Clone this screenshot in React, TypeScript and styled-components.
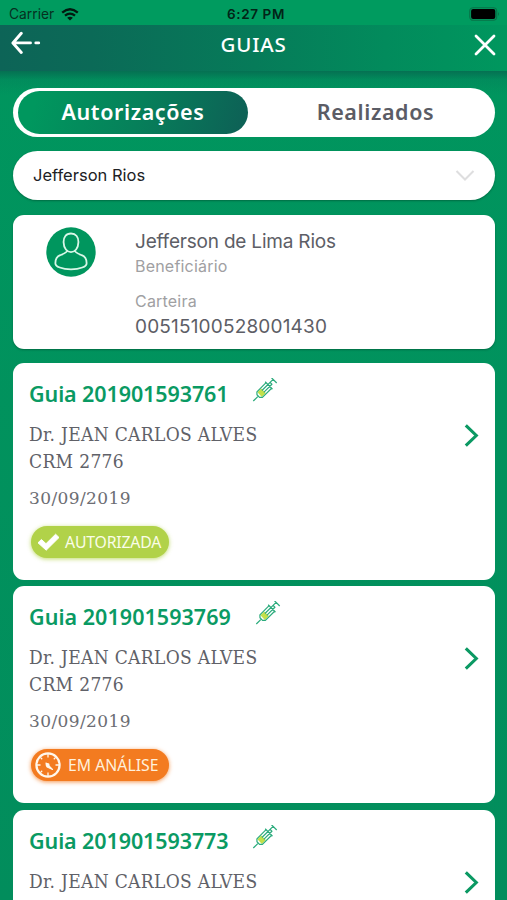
import React from "react";
import styled, { createGlobalStyle } from "styled-components";

const GREEN = "#00965e";
const INTER = `Inter, "Liberation Sans", sans-serif`;
const SANS = `"Noto Sans", "Open Sans", sans-serif`;
const SLAB = `"DejaVu Serif Condensed", "DejaVu Serif", serif`;

const Global = createGlobalStyle`
  * { box-sizing: border-box; }
  body { margin: 0; background: ${GREEN}; overflow: hidden; }
`;

const Screen = styled.div`
  width: 507px;
  height: 900px;
  overflow: hidden;
  background: linear-gradient(#00965e, #028d5c);
  font-family: ${SANS};
`;

const StatusBar = styled.div`
  height: 25px;
  display: grid;
  grid-template-columns: 1fr auto 1fr;
  align-items: center;
  padding: 3px 7px 0 9px;
  background: #009b5f;
  color: #06301f;
  font-family: ${INTER};
  font-size: 13.8px;
  line-height: 22px;
`;

const CarrierGroup = styled.div`
  display: flex;
  align-items: center;
  gap: 7px;
`;

const Clock = styled.span`
  margin-left: 3px;
  color: #022417;
  font-weight: 600;
  font-size: 13.5px;
  letter-spacing: 0.6px;
`;

const BatterySlot = styled.div`
  display: flex;
  justify-content: flex-end;
`;

const Header = styled.header`
  height: 46px;
  display: grid;
  grid-template-columns: 1fr auto 1fr;
  align-items: start;
  padding: 0 11px;
  background: linear-gradient(90deg, #0d6457 0%, #0b6a57 18%, #067b59 50%, #028b5c 76%, #00975e 100%);
`;

const HeaderTitle = styled.h1`
  margin: 4px 0 0;
  color: #fff;
  font-size: 20.5px;
  font-weight: 500;
  line-height: 30px;
  letter-spacing: 0.8px;
`;

const HeaderButton = styled.button<{ $end?: boolean }>`
  display: flex;
  margin: ${(p) => (p.$end ? "9px 0 0" : "6px 0 0")};
  padding: 0;
  border: 0;
  background: none;
  justify-self: ${(p) => (p.$end ? "end" : "start")};
`;

const Content = styled.main`
  display: flex;
  flex-direction: column;
  padding: 17px 12px 0 13px;
  background: linear-gradient(rgba(8, 90, 75, 0.62), rgba(4, 120, 88, 0.3) 9px, rgba(0, 150, 94, 0) 24px);
`;

const Tabs = styled.div`
  display: flex;
  height: 49px;
  padding: 3px 5px;
  border-radius: 25px;
  background: #fff;
`;

const Tab = styled.button<{ $active?: boolean }>`
  flex: ${(p) => (p.$active ? "0 0 230px" : "1")};
  padding: ${(p) => (p.$active ? "0 0 1px" : "0 0 1px 13px")};
  border: 0;
  border-radius: 22px;
  background: ${(p) =>
    p.$active ? "linear-gradient(105deg, #00975e 8%, #06805a 52%, #0d6256 96%)" : "none"};
  color: ${(p) => (p.$active ? "#fff" : "#5b5c65")};
  font-family: ${SANS};
  font-size: 21.5px;
  font-weight: 650;
  line-height: 30px;
  letter-spacing: 0.6px;
`;

const Select = styled.div`
  display: flex;
  align-items: center;
  justify-content: space-between;
  height: 49px;
  margin-top: 14px;
  padding: 0 20px 2px;
  border-radius: 25px;
  background: #fff;
  box-shadow: 0 1px 2px rgba(0, 50, 30, 0.4);
  color: #202124;
  font: 400 16.5px/24px ${INTER};
`;

const ProfileCard = styled.section`
  display: grid;
  grid-template-columns: 89px 1fr;
  height: 134px;
  margin-top: 15px;
  padding: 14.5px 33px 0;
  border-radius: 11px;
  background: #fff;
  box-shadow: 0 1px 2px rgba(0, 50, 30, 0.4);
  font-family: ${INTER};
`;

const Avatar = styled.div`
  width: 50px;
  height: 50px;
  margin-top: -3px;
`;

const ProfileText = styled.div`
  display: flex;
  flex-direction: column;
`;

const Value = styled.span<{ $tight?: boolean }>`
  color: #5d5e66;
  font-size: 19px;
  line-height: 24px;
  letter-spacing: ${(p) => (p.$tight ? "-0.2px" : "0.18px")};
`;

const Label = styled.span`
  color: #a0a0a2;
  font-size: 16px;
  line-height: 24px;
  letter-spacing: 0.2px;

  & + ${Value} { margin-top: 2px; }
  & + & { margin-top: 11px; }
`;

const GuideList = styled.div`
  display: flex;
  flex-direction: column;
  gap: 6.5px;
  margin-top: 13.6px;
`;

const GuideCard = styled.article`
  display: flex;
  justify-content: space-between;
  height: 217px;
  padding: 15px 16px 0 16px;
  border-radius: 11px;
  background: #fff;
`;

const GuideBody = styled.div`
  display: flex;
  flex-direction: column;
  align-items: flex-start;
`;

const GuideHeading = styled.div`
  display: flex;
  gap: 24px;
  height: 30px;
`;

const GuideTitle = styled.h2<{ $wide?: boolean }>`
  margin: 1px 0 0;
  color: #0a9a63;
  font-size: 21.5px;
  font-weight: 600;
  line-height: 30px;
  letter-spacing: ${(p) => (p.$wide ? "0.04px" : "-0.1px")};
`;

const Doctor = styled.p`
  margin: 13px 0 0;
  color: #606168;
  font: 400 19px/27px ${SLAB};
  letter-spacing: 0.33px;
`;

const GuideDate = styled.time`
  margin-top: 12px;
  color: #6c6d73;
  font: 400 17px/22px "DejaVu Serif", serif;
  letter-spacing: 0.4px;
`;

const StatusPill = styled.div<{ $pending?: boolean }>`
  display: flex;
  align-items: center;
  gap: ${(p) => (p.$pending ? "7px" : "5px")};
  width: 138px;
  height: 32px;
  margin: 17px 0 0 2px;
  padding-left: ${(p) => (p.$pending ? "4px" : "6px")};
  border-radius: 16px;
  background: ${(p) => (p.$pending ? "#f37b20" : "#b1d249")};
  box-shadow: 0 1px 4px ${(p) => (p.$pending ? "rgba(243,123,32,.8)" : "rgba(177,210,73,.8)")};
  color: ${(p) => (p.$pending ? "#fff0dc" : "#fafde8")};
  font-size: 15.8px;
  line-height: 32px;
  letter-spacing: ${(p) => (p.$pending ? "0px" : "-0.2px")};
`;

const ChevronSlot = styled.div`
  margin-top: 45px;
`;

const WifiIcon = () => (
  <svg width="18" height="13" viewBox="0 0 18 13" fill="none" stroke="#02190f" strokeWidth="2.3">
    <path d="M1.2 4.7Q9-2.1 16.8 4.7M4 7.7Q9 3.5 14 7.7" />
    <path d="M9 12.6 6.1 9.8Q9 7.5 11.9 9.8Z" fill="#02190f" stroke="none" />
  </svg>
);

const BatteryIcon = () => (
  <svg width="31" height="14" viewBox="0 0 31 14">
    <rect x=".7" y=".7" width="27" height="12.6" rx="3.5" fill="none" stroke="#087348" strokeWidth="1.1" />
    <rect x="2.1" y="2.1" width="24.2" height="9.8" rx="2" fill="#000" />
    <path d="M29 5q2 2 0 4z" fill="#087348" />
  </svg>
);

const BackIcon = () => (
  <svg width="30" height="24" viewBox="0 0 30 24" fill="none" stroke="#fff" strokeWidth="2.9" strokeLinecap="round" strokeLinejoin="round">
    <path d="M10.3 2.3 1.9 12l8.4 9.500M2.400 11.900H19.500M24.800 11.900H27.700" />
  </svg>
);

const CloseIcon = () => (
  <svg width="22" height="22" viewBox="0 0 22 22" stroke="#fff" strokeWidth="2.8" strokeLinecap="round">
    <path d="m2 2 18 18M20 2 2 20" />
  </svg>
);

const DownIcon = () => (
  <svg width="20" height="13" viewBox="0 0 20 13" fill="none" stroke="#dededf" strokeWidth="2">
    <path d="m1.500 3 8.500 8.500L18.500 3" />
  </svg>
);

const PersonIcon = () => (
  <svg width="50" height="50" viewBox="0 0 50 50" fill="none">
    <circle cx="25" cy="25" r="24.7" fill={GREEN} />
    <path
      d="M25 6.500c-5 0-7.600 3.600-7.400 8.900.2 6 3.400 9.800 7.400 9.800s7.200-3.800 7.400-9.800c.2-5.300-2.400-8.900-7.400-8.900ZM20.300 25c-1.400 1.500-3.400 2.200-6 3.200-3.500 1.400-5 4-4.900 8.200 0 3 6.400 6 15.600 6s15.600-3 15.600-6c.1-4.200-1.400-6.800-4.900-8.200-2.600-1-4.600-1.700-6-3.200"
      stroke="#d9f7e8"
      strokeWidth="1.8"
      strokeLinecap="round"
    />
  </svg>
);

const SyringeIcon = () => (
  <svg width="26" height="25" viewBox="0 0 26 25" fill="none" stroke="#2aab7c" strokeWidth="1.2" strokeLinejoin="round">
    <g transform="translate(1.300 23) rotate(-45)">
      <rect x="9" y="-3.200" width="5.500" height="6.400" fill="#c3e04a" stroke="none" />
      <path d="M0 0H7M7-1.800 9-3.900H22V3.900H9L7 1.800ZM22-5.200V5.200M13.500-1.300H29.300M13.500 1.300H25V-1.300M29.300-3.800V3.800" />
    </g>
  </svg>
);

const ChevronIcon = () => (
  <svg width="15" height="25" viewBox="0 0 15 25" fill="none" stroke="#0b9963" strokeWidth="3.1">
    <path d="m1.800 2.300 10.500 10.200L1.800 22.700" />
  </svg>
);

const CheckIcon = () => (
  <svg width="23" height="18" viewBox="0 0 23 18">
    <path d="M1 9.800 4.400 6.500 9 10.700 18.600 1.200 22 4.500 9.200 17.200z" fill="#fff" stroke="#fff" strokeWidth="1" strokeLinejoin="round" />
  </svg>
);

const GaugeIcon = () => (
  <svg width="26" height="26" viewBox="0 0 26 26" fill="none" stroke="#fff7ec">
    <circle cx="13" cy="13" r="11.600" strokeWidth="2.200" />
    <path d="M13 2v3.500M13 20.500V24M2 13h3.500M20.500 13H24M5.400 5.400l1.800 1.800M18.800 7.200l1.800-1.800M5.400 20.600l1.800-1.800" strokeWidth="1.300" />
    <path d="M11 11 17.500 17.500 12.200 15Z" fill="#fff7ec" strokeWidth="1.200" strokeLinejoin="round" />
    <circle cx="12.600" cy="13" r="2" fill="#fff7ec" stroke="none" />
  </svg>
);

const guides = [
  { id: "201901593761", pending: false },
  { id: "201901593769", pending: true },
  { id: "201901593773", pending: false },
];

export default function App() {
  return (
    <Screen>
      <Global />
      <StatusBar>
        <CarrierGroup>Carrier <WifiIcon /></CarrierGroup>
        <Clock>6:27 PM</Clock>
        <BatterySlot><BatteryIcon /></BatterySlot>
      </StatusBar>
      <Header>
        <HeaderButton aria-label="Voltar"><BackIcon /></HeaderButton>
        <HeaderTitle>GUIAS</HeaderTitle>
        <HeaderButton $end aria-label="Fechar"><CloseIcon /></HeaderButton>
      </Header>
      <Content>
        <Tabs>
          <Tab $active>Autorizações</Tab>
          <Tab>Realizados</Tab>
        </Tabs>
        <Select>Jefferson Rios <DownIcon /></Select>
        <ProfileCard>
          <Avatar><PersonIcon /></Avatar>
          <ProfileText>
            <Value $tight>Jefferson de Lima Rios</Value>
            <Label>Beneficiário</Label>
            <Label>Carteira</Label>
            <Value>00515100528001430</Value>
          </ProfileText>
        </ProfileCard>
        <GuideList>
          {guides.map((guide) => (
            <GuideCard key={guide.id}>
              <GuideBody>
                <GuideHeading>
                  <GuideTitle $wide={guide.pending}>Guia {guide.id}</GuideTitle>
                  <SyringeIcon />
                </GuideHeading>
                <Doctor>Dr. JEAN CARLOS ALVES<br />CRM 2776</Doctor>
                <GuideDate>30/09/2019</GuideDate>
                <StatusPill $pending={guide.pending}>
                  {guide.pending ? <GaugeIcon /> : <CheckIcon />}
                  {guide.pending ? "EM ANÁLISE" : "AUTORIZADA"}
                </StatusPill>
              </GuideBody>
              <ChevronSlot><ChevronIcon /></ChevronSlot>
            </GuideCard>
          ))}
        </GuideList>
      </Content>
    </Screen>
  );
}
